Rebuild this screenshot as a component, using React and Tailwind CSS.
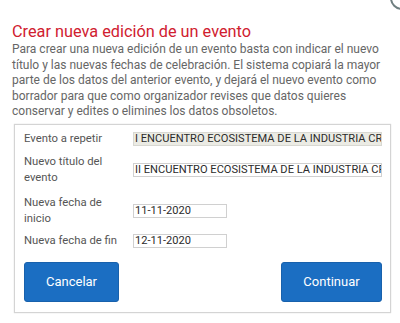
import React from 'react';

const Row = ({ label, className = '', children }) => (
    <div className={`flex items-center ${className}`}>
        <div className="w-[109px] shrink-0 pr-[5px] text-[11.3px] leading-[15.5px] text-[#555]">{label}</div>
        <div className="flex-1 min-w-0">{children}</div>
    </div>
);

const field = 'h-[14px] overflow-hidden whitespace-nowrap border pl-[1px] text-[11.1px] leading-[12px] text-[#2b2b2b]';

const App = () => {
    return (
        <div className="relative w-[400px] h-[323px] overflow-hidden bg-white" style={{ fontFamily: 'Roboto, "Noto Sans", sans-serif' }}>
            {/* close button peeking in at the corner */}
            <div className="absolute -top-[14px] -right-[14px] w-[24px] h-[24px] rounded-full border-2 border-[#6f7f80] bg-white" />

            <div className="px-3 pt-[22px]">
                <h1 className="text-[16.3px] leading-[20px] text-[#d0202f] font-normal">Crear nueva edición de un evento</h1>
                <p className="text-[12px] leading-[15.6px] text-[#666]">
                    Para crear una nueva edición de un evento basta con indicar el nuevo título y las nuevas fechas de celebración. El sistema copiará la mayor parte de los datos del anterior evento, y dejará el nuevo evento como borrador para que como organizador revises que datos quieres conservar y edites o elimines los datos obsoletos.
                </p>
            </div>

            <div className="ml-[14px] mr-[9px] mt-[4px] border border-[#d4d4d4] shadow-[0_0_1px_#ccc] pl-[9px] pr-[8px] pt-[6px] pb-[10px]">
                <Row label="Evento a repetir">
                    <div className={`${field} w-full border-[#d8d8d2] bg-[#ebebe4]`}>
                        I ENCUENTRO ECOSISTEMA DE LA INDUSTRIA CREATIVA
                    </div>
                </Row>
                <Row label="Nuevo título del evento" className="mt-2">
                    <div className={`${field} w-full border-[#d0d0d0] bg-white`}>
                        II ENCUENTRO ECOSISTEMA DE LA INDUSTRIA CREATIVA
                    </div>
                </Row>
                <Row label="Nueva fecha de inicio" className="mt-[10px]">
                    <div className={`${field} w-[94px] border-[#d0d0d0] bg-white`}>
                        11-11-2020
                    </div>
                </Row>
                <Row label="Nueva fecha de fin" className="mt-[7px]">
                    <div className={`${field} w-[94px] border-[#d0d0d0] bg-white`}>
                        12-11-2020
                    </div>
                </Row>

                <div className="mt-[13px] flex justify-between">
                    <button className="w-[95px] h-[40px] rounded-[3px] bg-[#1b6ec2] border border-[#1861ac] text-white text-[13px]">Cancelar</button>
                    <button className="w-[101px] h-[40px] rounded-[3px] bg-[#1b6ec2] border border-[#1861ac] text-white text-[13px]">Continuar</button>
                </div>
            </div>
        </div>
    );
};

export default App;
